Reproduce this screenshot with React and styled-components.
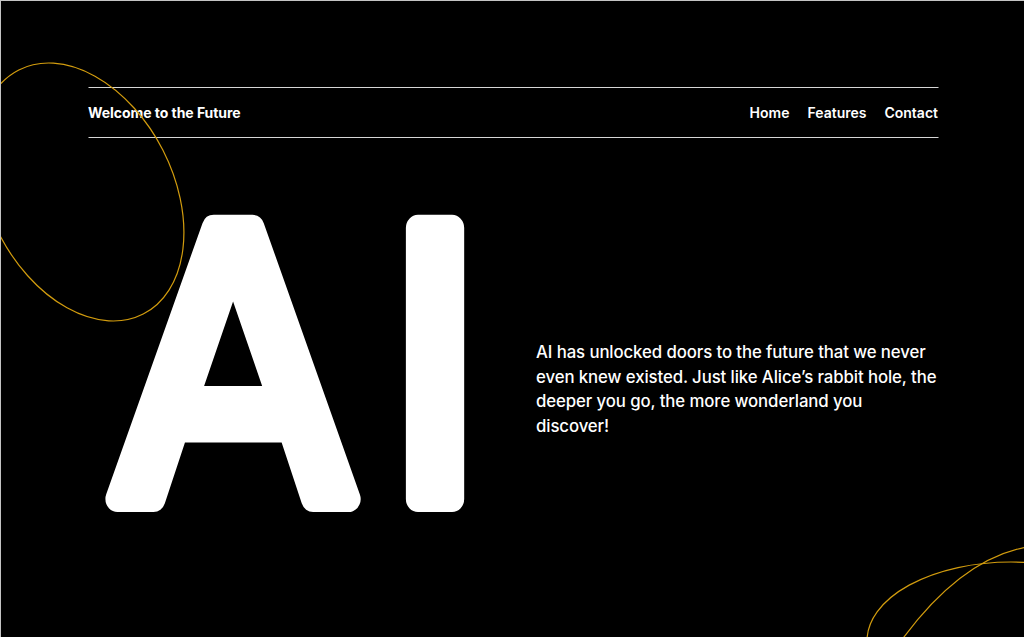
import React from "react";
import styled, { createGlobalStyle } from "styled-components";

const GlobalStyle = createGlobalStyle`
  html, body { margin: 0; padding: 0; background: #000; }
  body { font-family: Inter, "Noto Sans", "Liberation Sans", sans-serif; }
  * { box-sizing: border-box; }
`;

const Page = styled.div`
  position: relative;
  width: 1024px;
  height: 637px;
  overflow: hidden;
  background: #000;
  border-top: 1px solid #c4c4c4;
  border-left: 1px solid #c4c4c4;
  color: #fff;
`;

const Container = styled.div`
  width: 850px;
  margin: 0 auto;
  padding-top: 86px;
  transform: translateX(0.5px);
`;

const Header = styled.header`
  height: 51px;
  display: flex;
  align-items: center;
  justify-content: space-between;
  border-top: 1px solid #d6d6d6;
  border-bottom: 1px solid #d6d6d6;
`;

const Brand = styled.div`
  font-size: 14px;
  font-weight: 700;
  letter-spacing: -0.05px;
`;

const Nav = styled.nav`
  display: flex;
  gap: 18px;
`;

const NavLink = styled.a`
  color: #fff;
  text-decoration: none;
  font-size: 14px;
  font-weight: 600;
`;

const Hero = styled.section`
  display: flex;
  align-items: flex-start;
  justify-content: space-between;
`;

const BigMark = styled.svg`
  display: block;
  width: 400px;
  height: 330px;
  margin-top: 62px;
  overflow: visible;
`;

const BigText = styled.text`
  font-family: "DejaVu Sans", "Liberation Sans", sans-serif;
  font-weight: 400;
  font-size: 372px;
  fill: #fff;
  stroke: #fff;
  stroke-width: 26px;
  stroke-linejoin: round;
  stroke-linecap: round;
`;

const Copy = styled.p`
  width: 402px;
  margin: 202px 0 0;
  font-size: 16.8px;
  line-height: 24.5px;
  font-weight: 500;
  letter-spacing: -0.1px;
  color: #fff;
`;

const Decor = styled.svg`
  position: absolute;
  inset: 0;
  width: 1024px;
  height: 637px;
  pointer-events: none;
  z-index: 2;
`;

export default function App() {
  return (
    <>
      <GlobalStyle />
      <Page>
        <Container>
          <Header>
            <Brand>Welcome to the Future</Brand>
            <Nav>
              <NavLink href="#">Home</NavLink>
              <NavLink href="#">Features</NavLink>
              <NavLink href="#">Contact</NavLink>
            </Nav>
          </Header>
          <Hero>
            <BigMark viewBox="0 0 400 330">
              <g transform="translate(17 0) scale(0.93 1)">
                <BigText x="10" y="299">
                  A<tspan dx="35">I</tspan>
                </BigText>
              </g>
            </BigMark>
            <Copy>
              AI has unlocked doors to the future that we never even knew
              existed. Just like Alice’s rabbit hole, the deeper you go, the
              more wonderland you discover!
            </Copy>
          </Hero>
        </Container>
        <Decor viewBox="0 0 1024 637">
          <g fill="none" stroke="#d29c0e" strokeWidth="1.2">
            <ellipse cx="80" cy="191" rx="137" ry="92" transform="rotate(63 80 191)" />
            <ellipse cx="1010" cy="640" rx="144" ry="79" />
            <path d="M 900 640 Q 960 558 1026 546" />
          </g>
        </Decor>
      </Page>
    </>
  );
}
